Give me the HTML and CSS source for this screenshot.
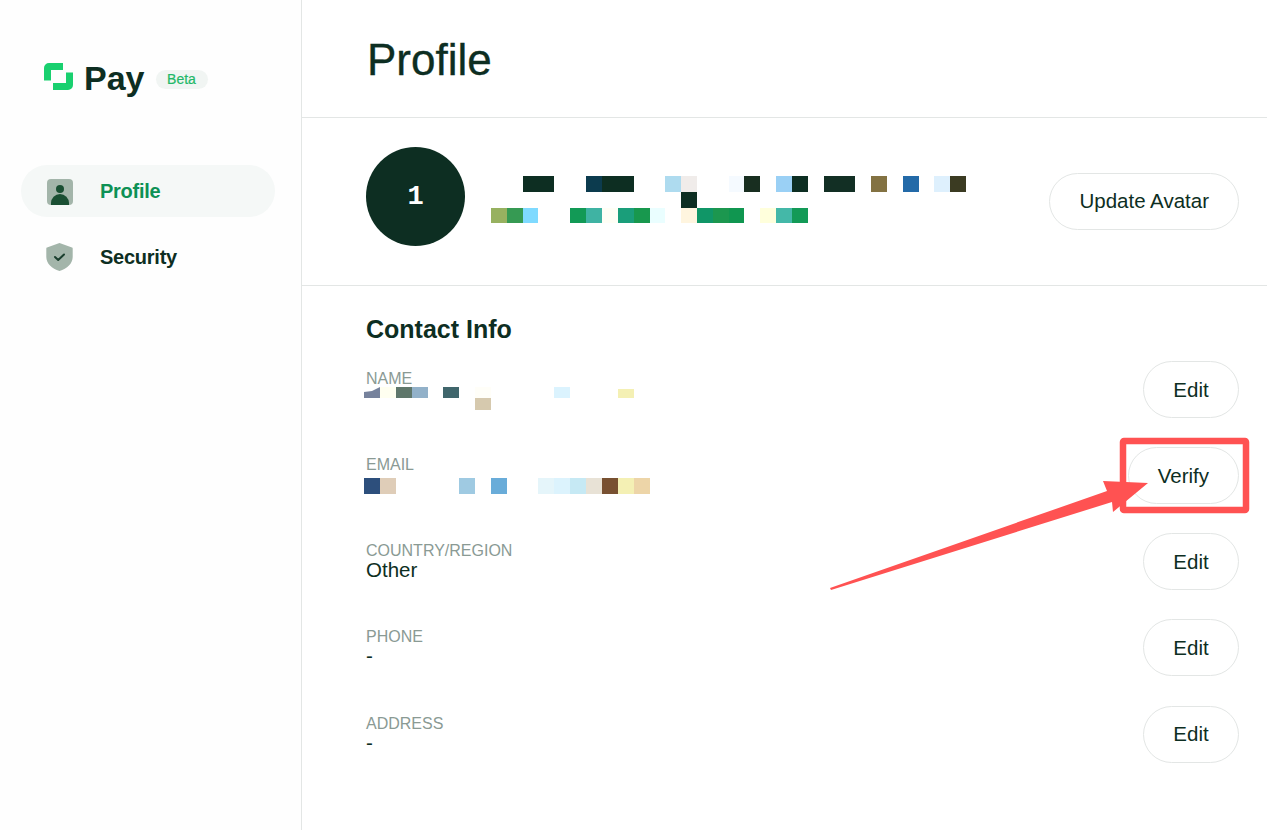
FILE: index.html
```html
<!DOCTYPE html>
<html lang="en">
<head>
<meta charset="utf-8">
<title>Profile</title>
<link rel="stylesheet" href="styles.css">
</head>
<body>
<div class="app">
  <aside class="sidebar">
    <div class="brand">
      <svg class="logo" width="29" height="27" viewBox="0 0 29 27"><path d="M3.500 17.500V5a1.500 1.500 0 0 1 1.500-1.500H19M25.500 9.500V22a1.500 1.500 0 0 1-1.500 1.500H9" fill="none" stroke="#19d06f" stroke-width="7" stroke-linejoin="round"/></svg>
      <span class="brand-name">Pay</span>
      <span class="beta">Beta</span>
    </div>
    <nav class="nav">
      <a class="nav-item active">
        <svg class="nav-icon person" width="26" height="26" viewBox="0 0 26 26"><rect width="26" height="26" rx="4" fill="#a3b5aa"/><circle cx="13" cy="10" r="4" fill="#1a4f33"/><path d="M4 26v-2a9 9 0 0 1 18 0v2z" fill="#1a4f33"/></svg>
        <span>Profile</span>
      </a>
      <a class="nav-item">
        <svg class="nav-icon shield" width="27" height="28" viewBox="0 0 27 28"><path d="M13.500 0 26 4.500a1 1 0 0 1 .7 1V14c0 6.500-5.500 11.500-13.200 14C5.800 25.500.300 20.500.300 14V5.500a1 1 0 0 1 .7-1z" fill="#a3b5aa"/><path d="m9 14 3.200 3 5.800-5.500" fill="none" stroke="#1a3f2e" stroke-width="2" stroke-linecap="round" stroke-linejoin="round"/></svg>
        <span>Security</span>
      </a>
    </nav>
  </aside>
  <main class="main">
    <header class="page-head"><h1>Profile</h1></header>
    <section class="identity">
      <div class="avatar">1</div>
      <svg class="id-mosaic" width="475" height="48" viewBox="491 176 475 48">
        <rect x="523" y="176" width="31" height="16" fill="#0d2e22"/><rect x="586" y="176" width="16" height="16" fill="#0c3b4e"/><rect x="602" y="176" width="32" height="16" fill="#0d2e22"/><rect x="665" y="176" width="16" height="16" fill="#aedbef"/><rect x="681" y="176" width="16" height="16" fill="#f0ecea"/><rect x="729" y="176" width="15" height="16" fill="#f5faff"/><rect x="744" y="176" width="16" height="16" fill="#182e20"/><rect x="776" y="176" width="16" height="16" fill="#9ad0f5"/><rect x="792" y="176" width="16" height="16" fill="#0d2e22"/><rect x="824" y="176" width="31" height="16" fill="#122f24"/><rect x="871" y="176" width="16" height="16" fill="#837242"/><rect x="903" y="176" width="16" height="16" fill="#236aa8"/><rect x="934" y="176" width="16" height="16" fill="#def0fd"/><rect x="950" y="176" width="16" height="16" fill="#3b3b22"/>
        <rect x="681" y="192" width="16" height="16" fill="#0d2e22"/>
        <rect x="491" y="208" width="16" height="15" fill="#97b160"/><rect x="507" y="208" width="16" height="15" fill="#369a53"/><rect x="523" y="208" width="15" height="15" fill="#7fdaff"/><rect x="570" y="208" width="16" height="15" fill="#129a56"/><rect x="586" y="208" width="16" height="15" fill="#3fb3a3"/><rect x="602" y="208" width="16" height="15" fill="#fffef5"/><rect x="618" y="208" width="16" height="15" fill="#1a9e7a"/><rect x="634" y="208" width="16" height="15" fill="#18984e"/><rect x="650" y="208" width="15" height="15" fill="#eafeff"/><rect x="681" y="208" width="16" height="15" fill="#fff5df"/><rect x="697" y="208" width="16" height="15" fill="#109667"/><rect x="713" y="208" width="16" height="15" fill="#1c974f"/><rect x="729" y="208" width="15" height="15" fill="#109650"/><rect x="760" y="208" width="16" height="15" fill="#ffffdc"/><rect x="776" y="208" width="16" height="15" fill="#44b8a8"/><rect x="792" y="208" width="16" height="15" fill="#139a57"/>
      </svg>
      <button class="btn avatar-btn">Update Avatar</button>
    </section>
    <section class="contact">
      <h2>Contact Info</h2>
      <div class="row">
        <div class="field">
          <div class="label">NAME</div>
          <svg class="mosaic" width="270" height="20" viewBox="364 389 270 20">
            <path d="M364 399v-6l8-1 8-4v11z" fill="#76829c"/><rect x="380" y="388" width="16" height="11" fill="#fffff0"/><rect x="396" y="388" width="16" height="11" fill="#5f776b"/><rect x="412" y="388" width="16" height="11" fill="#92b1c9"/><rect x="443" y="388" width="16" height="11" fill="#40666c"/><rect x="475" y="388" width="16" height="11" fill="#fffef8"/><rect x="475" y="399" width="16" height="12" fill="#d6c9ae"/><rect x="554" y="388" width="16" height="11" fill="#dbf3fe"/><rect x="618" y="390" width="16" height="9" fill="#f4f0b4"/>
          </svg>
        </div>
        <button class="btn">Edit</button>
      </div>
      <div class="row">
        <div class="field">
          <div class="label">EMAIL</div>
          <svg class="mosaic" width="286" height="20" viewBox="364 475 286 20">
            <rect x="364" y="479" width="16" height="16" fill="#2d4f7c"/><rect x="380" y="479" width="16" height="16" fill="#dfcdb8"/><rect x="459" y="479" width="16" height="16" fill="#9fcae2"/><rect x="491" y="479" width="16" height="16" fill="#69acd9"/><rect x="538" y="479" width="16" height="16" fill="#e5f5fa"/><rect x="554" y="479" width="16" height="16" fill="#dcf3fd"/><rect x="570" y="479" width="16" height="16" fill="#c6e9f4"/><rect x="586" y="479" width="16" height="16" fill="#e8e2d6"/><rect x="602" y="479" width="16" height="16" fill="#785031"/><rect x="618" y="479" width="16" height="16" fill="#f4f0b4"/><rect x="634" y="479" width="16" height="16" fill="#edd5a8"/>
          </svg>
        </div>
        <button class="btn">Verify</button>
      </div>
      <div class="row">
        <div class="field">
          <div class="label">COUNTRY/REGION</div>
          <div class="value">Other</div>
        </div>
        <button class="btn">Edit</button>
      </div>
      <div class="row">
        <div class="field">
          <div class="label">PHONE</div>
          <div class="value">-</div>
        </div>
        <button class="btn">Edit</button>
      </div>
      <div class="row">
        <div class="field">
          <div class="label">ADDRESS</div>
          <div class="value">-</div>
        </div>
        <button class="btn">Edit</button>
      </div>
    </section>
  </main>
</div>
<svg class="annotation" width="1267" height="830" viewBox="0 0 1267 830">
  <rect x="1123" y="441" width="123" height="69" rx="1" fill="none" stroke="#ff5252" stroke-width="6.500"/>
  <path d="M830 588 831 590 1112 502 1113 512 1148 483 1103 481 1107 491z" fill="#ff5252"/>
</svg>
</body>
</html>
```
FILE: styles.css
```css
* { box-sizing: border-box; }
html, body { margin: 0; height: 100%; }
body {
  font-family: "Liberation Sans", Arial, sans-serif;
  color: #0d2e22;
  background: #fff;
  overflow: hidden;
}
.app { display: flex; height: 830px; }
.sidebar {
  width: 302px;
  flex: none;
  border-right: 1px solid #e3e6e5;
  background: #fefefe;
  padding: 63px 26px 0 21px;
}
.brand { display: flex; align-items: center; padding-left: 23px; height: 27px; }
.logo { flex: none; }
.brand-name {
  font-size: 34px;
  font-weight: 700;
  line-height: 27px;
  margin-left: 11px;
  margin-top: 3px;
}
.beta {
  margin: 6px 0 0 11px;
  width: 52px;
  height: 19px;
  border-radius: 10px;
  background: #f1f5f3;
  color: #22b868;
  font-size: 14px;
  -webkit-text-stroke: 0.2px #22b868;
  line-height: 19px;
  text-align: center;
}
.nav { display: flex; flex-direction: column; gap: 14px; margin-top: 75px; }
.nav-item {
  display: flex;
  align-items: center;
  height: 52px;
  border-radius: 26px;
  padding-left: 26px;
  gap: 27px;
  font-size: 20px;
  font-weight: 700;
  letter-spacing: -0.25px;
  color: #0d2e22;
}
.nav-item.active { background: #f5f8f7; color: #0d9155; }
.nav-icon { flex: none; }
.nav-icon.person { margin-top: 2px; }
.nav-icon.shield { margin-left: -1px; }
.main { flex: 1; min-width: 0; }
.page-head {
  height: 118px;
  border-bottom: 1px solid #e3e6e5;
  padding: 2px 28px 0 65px;
  display: flex;
  align-items: center;
}
h1 {
  margin: 0;
  font-size: 44px;
  font-weight: 400;
  -webkit-text-stroke: 0.35px #0d2e22;
  line-height: 1;
}
.identity {
  display: flex;
  align-items: flex-start;
  height: 168px;
  padding: 29px 28px 0 64px;
  border-bottom: 1px solid #e3e6e5;
}
.avatar {
  width: 99px;
  height: 99px;
  flex: none;
  border-radius: 50%;
  background: #0d2e22;
  color: #fff;
  font-family: "Liberation Mono", monospace;
  font-size: 27px;
  font-weight: 700;
  display: flex;
  align-items: center;
  justify-content: center;
}
.id-mosaic { margin: 29px 0 0 26px; flex: none; }
.btn {
  font: inherit;
  font-size: 20.500px;
  color: #0d2e22;
  background: #fff;
  border: 1px solid #e3e6e5;
  border-radius: 29px;
  height: 57px;
  min-width: 96px;
  padding: 0 29px;
  flex: none;
  margin-left: auto;
}
.avatar-btn { margin-top: 26px; padding-bottom: 2px; }
.contact { padding: 28px 28px 0 64px; }
h2 {
  margin: 0 0 17.100px;
  font-size: 25px;
  font-weight: 700;
  line-height: 30px;
}
.row {
  display: flex;
  align-items: center;
  height: 57px;
  margin-bottom: 29.120px;
}
.field { min-width: 0; margin-top: -3px; }
.label { height: 20px; padding-top: 2px; font-size: 16px; line-height: 18px; color: #8a9a94; }
.value { font-size: 20.500px; line-height: 20px; color: #0d2e22; }
.mosaic { display: block; margin-left: -2px; overflow: visible; }
.annotation { position: absolute; top: 0; left: 0; pointer-events: none; }
```
